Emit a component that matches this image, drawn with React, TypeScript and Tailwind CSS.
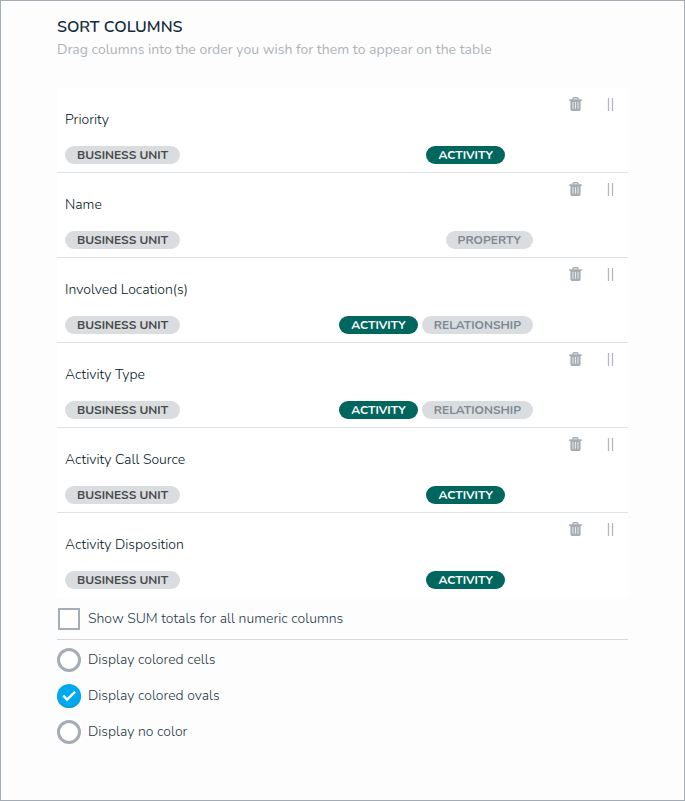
import React from "react";

type Tag = "activity" | "property" | "relationship";

interface Column {
  name: string;
  tags: Tag[];
}

const columns: Column[] = [
  { name: "Priority", tags: ["activity"] },
  { name: "Name", tags: ["property"] },
  { name: "Involved Location(s)", tags: ["activity", "relationship"] },
  { name: "Activity Type", tags: ["activity", "relationship"] },
  { name: "Activity Call Source", tags: ["activity"] },
  { name: "Activity Disposition", tags: ["activity"] },
];

const tagStyles: Record<Tag | "unit", string> = {
  unit: "bg-[#d9dde0] text-[#4a4a4a]",
  activity: "bg-[#00665e] text-white",
  property: "bg-[#d9dde0] text-[#808890]",
  relationship: "bg-[#d9dde0] text-[#808890]",
};

function Pill({ kind, label }: { kind: Tag | "unit"; label: string }) {
  return (
    <span
      className={`inline-flex h-[18px] items-center justify-center rounded-full px-3 text-[12px] leading-[18px] font-bold whitespace-nowrap uppercase ${tagStyles[kind]}`}
    >
      {label}
    </span>
  );
}

function TrashIcon() {
  return (
    <svg width="13" height="14" viewBox="0 0 13 14" fill="none" aria-hidden="true">
      <path d="M4 2.6V1.8Q4 .8 5 .8h3Q9 .8 9 1.8v.8" stroke="#a5adb3" strokeWidth="1.4" />
      <path d="M0.3 2.3h12.4v1.6H11.6v8.4q0 1.6-1.5 1.6H2.9q-1.5 0-1.5-1.6V3.9H0.3Z" fill="#a5adb3" />
      <path d="M4 5v6.8M6.5 5v6.8M9 5v6.8" stroke="#e6e9ec" strokeWidth="1" />
    </svg>
  );
}

function GripIcon() {
  return (
    <svg width="7" height="13" viewBox="0 0 7 13" aria-hidden="true">
      <path d="M1.5 0v13M5.5 0v13" stroke="#b3b7bd" strokeWidth="1.3" />
    </svg>
  );
}

function ColumnRow({ column }: { column: Column }) {
  const single = column.tags.length === 1 && column.tags[0] === "activity";
  return (
    <li className="flex h-[85px] border-b border-[#dfe2e4] bg-white pl-2 last:border-transparent">
      <div className="flex flex-1 flex-col justify-between pt-[22px] pb-2">
        <span className="text-[14px] leading-5 font-light text-[#001524]">{column.name}</span>
        <div className="flex items-center justify-between">
          <Pill kind="unit" label="Business Unit" />
          <div className={`flex gap-1 ${single ? "pr-7" : ""}`}>
            {column.tags.map((tag) => (
              <Pill key={tag} kind={tag} label={tag} />
            ))}
          </div>
        </div>
      </div>
      <div className="flex w-[95px] items-start justify-end gap-[25px] pt-[9px] pr-3.5">
        <button type="button" aria-label={`Remove ${column.name}`} className="flex h-[14px] items-center">
          <TrashIcon />
        </button>
        <button type="button" aria-label={`Move ${column.name}`} className="flex h-[14px] cursor-grab items-center">
          <GripIcon />
        </button>
      </div>
    </li>
  );
}

function ColorOption({ label, checked }: { label: string; checked?: boolean }) {
  return (
    <label className="flex h-6 items-center gap-[7px] text-[14px] leading-6 font-light">
      <span className="grid size-6 place-items-center">
        <input
          type="radio"
          name="color"
          defaultChecked={checked}
          className="peer col-start-1 row-start-1 size-6 appearance-none rounded-full border-3 border-[#a5adb4] bg-white checked:border-0 checked:bg-[#00a9ee] checked:shadow-[inset_0_-2px_0_#0b9bdb]"
        />
        <svg
          width="14"
          height="12"
          viewBox="0 0 14 12"
          fill="none"
          aria-hidden="true"
          className="pointer-events-none invisible col-start-1 row-start-1 peer-checked:visible"
        >
          <path d="M1.2 5.7 5 9.5 13 1.8" stroke="#fff" strokeWidth="2.4" />
        </svg>
      </span>
      {label}
    </label>
  );
}

export default function App() {
  return (
    <main className="min-h-screen border border-[#a3abb4] bg-[#fdfdfd] px-14 pt-4 font-['Nunito','Open_Sans',sans-serif] text-[#243746]">
      <h1 className="text-[16px] leading-5 font-semibold text-[#152b3c]">SORT COLUMNS</h1>
      <p className="pt-[3px] text-[14px] leading-5 text-[#adb4b9]">
        Drag columns into the order you wish for them to appear on the table
      </p>
      <ul className="mt-7">
        {columns.map((column) => (
          <ColumnRow key={column.name} column={column} />
        ))}
      </ul>
      <label className="flex h-[42px] items-center gap-2 border-b border-[#d5d9dc] pl-px text-[14px] leading-5 font-light">
        <input type="checkbox" className="size-[22px] appearance-none border-2 border-[#a5adb4] bg-white checked:bg-[#00a9ee]" />
        Show SUM totals for all numeric columns
      </label>
      <fieldset className="flex flex-col gap-3 pt-2">
        <ColorOption label="Display colored cells" />
        <ColorOption label="Display colored ovals" checked />
        <ColorOption label="Display no color" />
      </fieldset>
    </main>
  );
}
